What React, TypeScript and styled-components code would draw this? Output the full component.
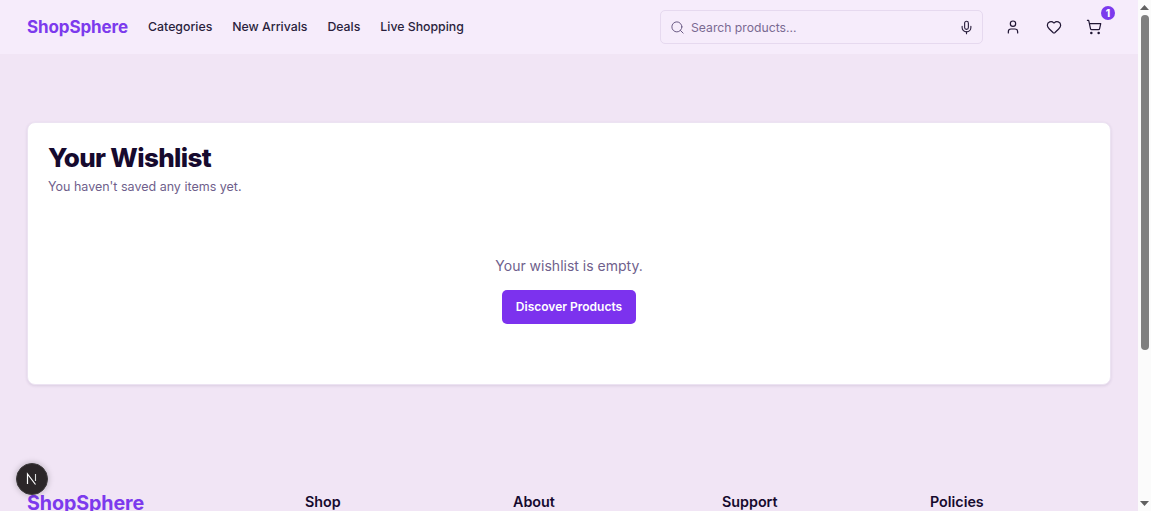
import React from "react";
import styled, { createGlobalStyle } from "styled-components";
import { Search, Mic, User, Heart, ShoppingCart } from "lucide-react";

const Global = createGlobalStyle`
  html, body { margin: 0; padding: 0; height: 100%; overflow: hidden; }
  body { font-family: Inter, "Liberation Sans", sans-serif; background: #f1e5f5; }
  #root { height: 100%; }
`;
const Shell = styled.div`display:flex;height:511px;width:1151px;overflow:hidden;`;
const Page = styled.div`flex:1;min-width:0;height:511px;overflow:hidden;background:#f1e5f5;`;
const Header = styled.header`height:54px;box-sizing:border-box;background:#f6ecfb;display:flex;align-items:center;padding:0 27px;`;
const Logo = styled.div<{$size:number}>`font-weight:700;font-size:${p=>p.$size}px;color:#7c3aed;letter-spacing:-0.1px;line-height:1;`;
const FooterLogo = styled(Logo)`margin-top:2px;`;
const Nav = styled.nav`display:flex;gap:20px;margin-left:20px;`;
const NavLink = styled.a`font-size:12.3px;font-weight:500;color:#2a1f3d;white-space:nowrap;line-height:14px;margin-top:-1px;`;
const SearchBox = styled.div`margin-left:auto;width:323px;height:34px;box-sizing:border-box;border:1px solid #e6d9ef;border-radius:5px;display:flex;align-items:center;padding:0 8px 0 9px;gap:6px;color:#6b5b85;`;
const Placeholder = styled.span`flex:1;font-size:12.2px;color:#7a6a92;`;
const IconRow = styled.div`display:flex;gap:24.500px;margin-left:22px;margin-right:9px;align-items:center;color:#1f1533;`;
const IconSlot = styled.span`position:relative;display:flex;width:16px;height:16px;`;
const Badge = styled.span`position:absolute;top:-13px;right:-13px;width:14px;height:14px;border-radius:50%;background:#7c3aed;color:#fff;font-size:10px;font-weight:800;display:flex;align-items:center;justify-content:center;`;
const Main = styled.main`padding:68px 27px 0;`;
const Card = styled.section`height:263px;box-sizing:border-box;background:#fff;border:1px solid #ece3f2;border-radius:8px;box-shadow:0 1px 3px rgba(60,30,90,.12);padding:21px 20px 20px;display:flex;flex-direction:column;`;
const Title = styled.h1`margin:0;font-size:26px;line-height:28px;font-weight:800;color:#160a2e;letter-spacing:-0.65px;`;
const Sub = styled.p`margin:6px 0 0;font-size:12.5px;line-height:18px;color:#6f5f8c;`;
const Empty = styled.div`display:flex;flex-direction:column;align-items:center;margin-top:60px;`;
const EmptyText = styled.p`margin:0;font-size:14px;line-height:20px;color:#6f5f8c;`;
const Button = styled.button`margin-top:14px;width:134px;height:34px;border:none;border-radius:5px;background:#7c32ee;color:#fff;font:600 12px/32px Inter,sans-serif;padding:0;`;
const Footer = styled.footer`margin-top:107px;padding:0 27px;display:grid;grid-template-columns:278px 208px 209px 208px 1fr;align-items:start;`;
const FootHead = styled.h3`margin:1px 0 0;font-size:14.3px;line-height:18px;font-weight:600;color:#160a2e;`;
const Badge2 = styled.div`position:absolute;left:16px;top:463px;width:32px;height:32px;border-radius:50%;background:#2b2628;border:1px solid #3d3a3c;box-sizing:border-box;color:#fff;display:flex;align-items:center;justify-content:center;box-shadow:0 0 6px rgba(0,0,0,.25);`;
const Bar = styled.div`width:13px;height:511px;background:#fbfbfb;display:flex;flex-direction:column;align-items:center;`;
const Arrow = styled.div`height:15px;display:flex;align-items:center;justify-content:center;`;
const Thumb = styled.div`width:8px;height:335px;background:#7f7f7f;border-radius:4px;`;
const Track = styled.div`flex:1;`;

export default function App() {
  return (
    <Shell>
      <Global />
      <Page>
        <Header>
          <Logo $size={17}>ShopSphere</Logo>
          <Nav>
            {["Categories","New Arrivals","Deals","Live Shopping"].map(t=><NavLink key={t}>{t}</NavLink>)}
          </Nav>
          <SearchBox>
            <Search size={15} strokeWidth={1.6}/>
            <Placeholder>Search products...</Placeholder>
            <Mic size={15} color="#2a1f3d" strokeWidth={1.8}/>
          </SearchBox>
          <IconRow>
            <IconSlot><User size={16} strokeWidth={1.8}/></IconSlot>
            <IconSlot><Heart size={16} strokeWidth={1.8}/></IconSlot>
            <IconSlot><ShoppingCart size={16} strokeWidth={1.8}/><Badge>1</Badge></IconSlot>
          </IconRow>
        </Header>
        <Main>
          <Card>
            <Title>Your Wishlist</Title>
            <Sub>You haven't saved any items yet.</Sub>
            <Empty>
              <EmptyText>Your wishlist is empty.</EmptyText>
              <Button>Discover Products</Button>
            </Empty>
          </Card>
        </Main>
        <Footer>
          <FooterLogo $size={19.7}>ShopSphere</FooterLogo>
          <FootHead>Shop</FootHead>
          <FootHead>About</FootHead>
          <FootHead>Support</FootHead>
          <FootHead>Policies</FootHead>
        </Footer>
      </Page>
      <Bar>
        <Arrow><svg width="9" height="5" viewBox="0 0 9 5"><path d="M4.5 0L9 5H0z" fill="#606060"/></svg></Arrow>
        <Thumb/>
        <Track/>
        <Arrow><svg width="9" height="5" viewBox="0 0 9 5"><path d="M0 0h9L4.500 5z" fill="#606060"/></svg></Arrow>
      </Bar>
      <Badge2>
        <svg width="14" height="14" viewBox="0 0 14 14" fill="none"><path d="M2.500 12V2l8 10.500" stroke="#fff" strokeWidth="1.200"/><path d="M10.500 2v7" stroke="#ddd" strokeWidth="1.100"/></svg>
      </Badge2>
    </Shell>
  );
}
